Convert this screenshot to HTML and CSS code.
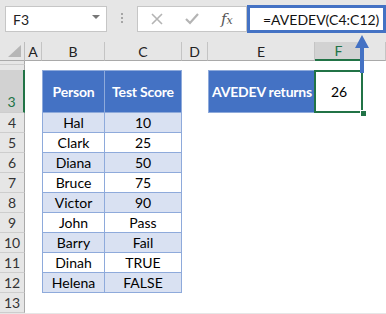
FILE: index.html
```html
<!DOCTYPE html>
<html lang="en">
<head>
    <meta charset="UTF-8">
    <title>AVEDEV</title>
    <link rel="stylesheet" href="styles.css">
</head>
<body>
<div class="app">
    <div class="formula-bar">
        <div class="name-box"><span>F3</span><span class="caret"></span></div>
        <div class="grip"><i></i><i></i><i></i></div>
        <div class="fx-tools">
            <svg class="tool cancel" width="12" height="12" viewBox="0 0 12 12"><path d="M1 1 L11 11 M11 1 L1 11" stroke="#b4b4b4" stroke-width="1.6" fill="none"/></svg>
            <svg class="tool" width="14" height="12" viewBox="0 0 14 12"><path d="M1 6 L5 10 L13 1" stroke="#b4b4b4" stroke-width="2.2" fill="none"/></svg>
            <span class="fx">f<span>x</span></span>
        </div>
        <div class="formula">=AVEDEV(C4:C12)</div>
    </div>

    <div class="sheet">
        <div class="corner"><span></span></div>
        <div class="ch">A</div>
        <div class="ch">B</div>
        <div class="ch">C</div>
        <div class="ch">D</div>
        <div class="ch">E</div>
        <div class="ch on">F</div>
        <div class="ch"></div>

        <!-- rows 1-2, scrolled mostly out of view -->
        <div class="rh"></div>
        <div></div><div></div><div></div><div></div><div></div><div></div><div></div>
        <div class="rh flat"></div>
        <div></div><div></div><div></div><div></div><div></div><div></div><div></div>

        <div class="rh on tall">3</div>
        <div></div>
        <div class="tc hd first top">Person</div>
        <div class="tc hd top">Test Score</div>
        <div></div>
        <div class="label">AVEDEV returns</div>
        <div class="result">26</div>
        <div></div>

        <div class="rh">4</div><div></div><div class="tc first alt">Hal</div><div class="tc alt">10</div><div></div><div></div><div></div><div></div>
        <div class="rh">5</div><div></div><div class="tc first">Clark</div><div class="tc">25</div><div></div><div></div><div></div><div></div>
        <div class="rh">6</div><div></div><div class="tc first alt">Diana</div><div class="tc alt">50</div><div></div><div></div><div></div><div></div>
        <div class="rh">7</div><div></div><div class="tc first">Bruce</div><div class="tc">75</div><div></div><div></div><div></div><div></div>
        <div class="rh">8</div><div></div><div class="tc first alt">Victor</div><div class="tc alt">90</div><div></div><div></div><div></div><div></div>
        <div class="rh">9</div><div></div><div class="tc first">John</div><div class="tc">Pass</div><div></div><div></div><div></div><div></div>
        <div class="rh">10</div><div></div><div class="tc first alt">Barry</div><div class="tc alt">Fail</div><div></div><div></div><div></div><div></div>
        <div class="rh">11</div><div></div><div class="tc first">Dinah</div><div class="tc">TRUE</div><div></div><div></div><div></div><div></div>
        <div class="rh">12</div><div></div><div class="tc first alt">Helena</div><div class="tc alt">FALSE</div><div></div><div></div><div></div><div></div>
        <div class="rh">13</div><div></div><div></div><div></div><div></div><div></div><div></div><div></div>
    </div>

    <svg class="arrow" width="20" height="40" viewBox="0 0 20 40">
        <path d="M10 0 L17 13 L12 13 L12 38 L8 38 L8 13 L3 13 Z" fill="#4472c4"/>
    </svg>
</div>
</body>
</html>
```

FILE: styles.css
```css
body {
    margin: 0;
    background: #fff;
    font-family: 'Lato', 'Liberation Sans', sans-serif;
}
.app {
    position: relative;
    width: 386px;
    height: 314px;
    overflow: hidden;
    background: #e6e6e6;
}

/* formula bar */
.formula-bar {
    display: flex;
    align-items: flex-start;
    height: 42px;
}
.name-box {
    display: flex;
    align-items: center;
    justify-content: space-between;
    box-sizing: border-box;
    width: 102px;
    height: 26px;
    margin: 6px 0 0 5px;
    padding: 0 6px 0 7px;
    background: #fff;
    border: 1px solid #c6c6c6;
    font-size: 14px;
    color: #222;
}
.caret {
    width: 0;
    height: 0;
    border-left: 4px solid transparent;
    border-right: 4px solid transparent;
    border-top: 4px solid #777;
    margin-top: -4px;
}
.grip {
    display: flex;
    flex-direction: column;
    gap: 2px;
    margin: 13px 0 0 14px;
}
.grip i {
    width: 2px;
    height: 2px;
    background: #a6a6a6;
}
.fx-tools {
    display: flex;
    align-items: center;
    box-sizing: border-box;
    width: 110px;
    height: 26px;
    margin: 6px 0 0 14px;
    padding-left: 13px;
    background: #fff;
    border: 1px solid #c6c6c6;
}
.tool.cancel {
    margin-right: 22px;
}
.fx {
    margin-left: 22px;
    font-family: 'DejaVu Serif', serif;
    font-style: italic;
    font-size: 15px;
    color: #555;
}
.fx span {
    font-size: 11px;
}
.formula {
    flex: 1;
    box-sizing: border-box;
    height: 28px;
    margin-top: 5px;
    padding: 3px 0 0 13px;
    background: #fff;
    border: 3px solid #4472c4;
    font-size: 14px;
    color: #111;
    white-space: nowrap;
}

/* grid */
.sheet {
    display: grid;
    grid-template-columns: 25px 17px 63px 77px 26px 107px 48px 23px;
    grid-template-rows: 19px 4px 5px 43px repeat(10, 20px);
    background: #fff;
    font-size: 14px;
    color: #000;
}
.sheet > div {
    box-sizing: border-box;
    overflow: hidden;
}
.corner {
    position: relative;
    background: #e6e6e6;
    border-right: 1px solid #bdbdbd;
    border-bottom: 1px solid #a9a9a9;
}
.corner span {
    position: absolute;
    right: 3px;
    bottom: 3px;
    width: 0;
    height: 0;
    border-left: 13px solid transparent;
    border-bottom: 12px solid #b6b6b6;
}
.ch {
    display: flex;
    align-items: center;
    justify-content: center;
    background: #e6e6e6;
    border-right: 1px solid #c4c4c4;
    border-bottom: 1px solid #a9a9a9;
    color: #222;
}
.ch.on {
    background: #d2d2d2;
    border-bottom: 2px solid #217346;
    color: #217346;
}
.rh {
    display: flex;
    align-items: center;
    justify-content: center;
    background: #e6e6e6;
    border-right: 1px solid #a9a9a9;
    border-bottom: 1px solid #cdcdcd;
    color: #333;
}
.rh.flat {
    border-bottom: none;
}
.rh.tall {
    align-items: flex-end;
    padding-bottom: 2px;
}
.rh.on {
    background: #d2d2d2;
    border-right: 2px solid #217346;
    color: #217346;
}

/* table */
.tc {
    display: flex;
    align-items: center;
    justify-content: center;
    border-right: 1px solid #8eaadb;
    border-bottom: 1px solid #8eaadb;
}
.tc.first {
    border-left: 1px solid #8eaadb;
}
.tc.top {
    border-top: 1px solid #8eaadb;
}
.tc.alt {
    background: #d9e1f2;
}
.tc.hd {
    background: #4472c4;
    color: #fff;
    font-weight: bold;
    font-size: 14px;
    letter-spacing: -0.2px;
}
.label {
    display: flex;
    align-items: center;
    padding-left: 3px;
    background: #4472c4;
    border: 1px solid #8eaadb;
    border-right: none;
    color: #fff;
    font-weight: bold;
    font-size: 14px;
    letter-spacing: -0.2px;
    white-space: nowrap;
}
.sheet > .result {
    position: relative;
    display: flex;
    align-items: center;
    justify-content: center;
    overflow: visible;
}
.result::after {
    content: "";
    position: absolute;
    top: 0;
    left: -1px;
    right: 0;
    bottom: 0;
    border: 2px solid #217346;
}
.result::before {
    content: "";
    position: absolute;
    right: -4px;
    bottom: -4px;
    width: 5px;
    height: 5px;
    background: #217346;
    border: 1px solid #fff;
    z-index: 1;
}

.arrow {
    position: absolute;
    left: 352px;
    top: 35px;
}
```
